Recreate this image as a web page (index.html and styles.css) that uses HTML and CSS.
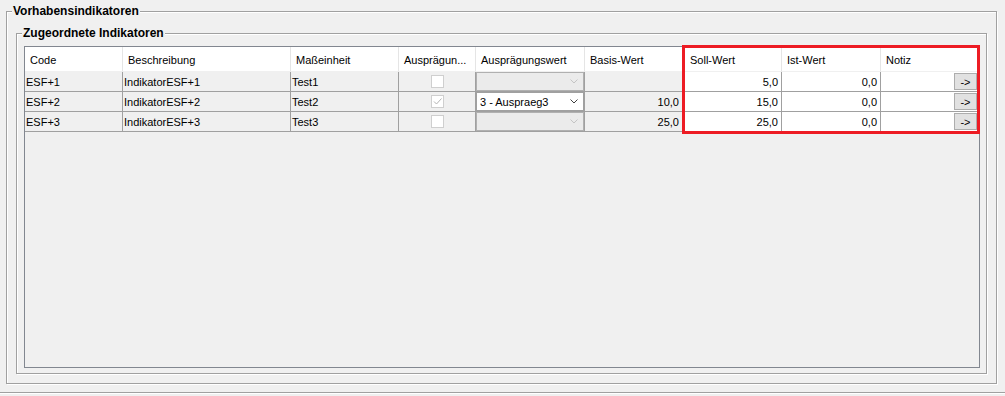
FILE: index.html
```html
<!DOCTYPE html>
<html>
<head>
	<meta charset="UTF-8">
	<title>Vorhabensindikatoren</title>
	<link rel="stylesheet" href="styles.css">
</head>
<body>
	<fieldset class="group outer">
		<legend>Vorhabensindikatoren</legend>
		<fieldset class="group inner">
			<legend>Zugeordnete Indikatoren</legend>
			<div class="grid-box">
				<table class="grid">
					<colgroup>
						<col class="c-code">
						<col class="c-desc">
						<col class="c-unit">
						<col class="c-flag">
						<col class="c-value">
						<col class="c-base">
						<col class="c-target">
						<col class="c-actual">
						<col class="c-note">
					</colgroup>
					<thead>
						<tr>
							<th>Code</th>
							<th>Beschreibung</th>
							<th>Maßeinheit</th>
							<th>Ausprägun...</th>
							<th>Ausprägungswert</th>
							<th>Basis-Wert</th>
							<th>Soll-Wert</th>
							<th>Ist-Wert</th>
							<th class="last">Notiz</th>
						</tr>
					</thead>
					<tbody>
						<tr>
							<td>ESF+1</td>
							<td>IndikatorESF+1</td>
							<td>Test1</td>
							<td class="check"><span class="box"></span></td>
							<td class="combo-cell">
								<div class="combo disabled"><span></span>
									<svg width="8" height="5" viewBox="0 0 8 5"><path d="M0.5 0.5 L4 4 L7.5 0.5" fill="none" stroke="#c4c4c4"/></svg>
								</div>
							</td>
							<td class="num base"></td>
							<td class="num edit">5,0</td>
							<td class="num edit">0,0</td>
							<td class="note last"><button class="more">-&gt;</button></td>
						</tr>
						<tr>
							<td>ESF+2</td>
							<td>IndikatorESF+2</td>
							<td>Test2</td>
							<td class="check">
								<span class="box">
									<svg width="11" height="11" viewBox="0 0 11 11"><path d="M2 5.5 L4.5 8 L9.5 2.5" fill="none" stroke="#b4b4b4"/></svg>
								</span>
							</td>
							<td class="combo-cell">
								<div class="combo"><span>3 - Auspraeg3</span>
									<svg width="8" height="5" viewBox="0 0 8 5"><path d="M0.5 0.5 L4 4 L7.5 0.5" fill="none" stroke="#404040"/></svg>
								</div>
							</td>
							<td class="num base">10,0</td>
							<td class="num edit">15,0</td>
							<td class="num edit">0,0</td>
							<td class="note last"><button class="more">-&gt;</button></td>
						</tr>
						<tr>
							<td>ESF+3</td>
							<td>IndikatorESF+3</td>
							<td>Test3</td>
							<td class="check"><span class="box"></span></td>
							<td class="combo-cell">
								<div class="combo disabled"><span></span>
									<svg width="8" height="5" viewBox="0 0 8 5"><path d="M0.5 0.5 L4 4 L7.5 0.5" fill="none" stroke="#c4c4c4"/></svg>
								</div>
							</td>
							<td class="num base">25,0</td>
							<td class="num edit">25,0</td>
							<td class="num edit">0,0</td>
							<td class="note last"><button class="more">-&gt;</button></td>
						</tr>
					</tbody>
				</table>
				<div class="highlight"></div>
			</div>
		</fieldset>
	</fieldset>
	<div class="separator"></div>
</body>
</html>
```

FILE: styles.css
```css
body {
    margin: 0;
    background: #f0f0f0;
    font-family: "Liberation Sans", Arial, sans-serif;
    font-size: 11px;
    color: #000;
}
.group {
    min-width: 0;
    padding: 0;
    border: 1px solid #a0a0a0;
    box-shadow: inset 1px 1px 0 #fff, 1px 1px 0 #fff;
}
.group > legend {
    margin-left: 5px;
    padding: 0 1px;
    background: #f0f0f0;
    font-size: 12px;
    font-weight: bold;
    line-height: 14px;
}
.outer {
    margin: 4px 8px 0 6px;
}
.inner {
    margin: 8px 9px 9px 9px;
}
.grid-box {
    position: relative;
    height: 322px;
    box-sizing: border-box;
    margin: 6px 6px 5px 7px;
    border: 1px solid #828790;
    background: #f0f0f0;
}
.grid {
    width: 954px;
    table-layout: fixed;
    border-collapse: separate;
    border-spacing: 0;
}
.c-code { width: 98px; }
.c-desc { width: 168px; }
.c-unit { width: 108px; }
.c-flag { width: 77px; }
.c-value { width: 109px; }
.c-base { width: 100px; }
.c-target { width: 97px; }
.c-actual { width: 99px; }
.c-note { width: 98px; }

.grid thead tr { height: 25px; }
.grid tbody tr { height: 20px; }
.grid th {
    padding: 2px 5px 0;
    background: #fff;
    border-right: 1px solid #e5e5e5;
    border-bottom: 1px solid #f0f0f0;
    font-weight: normal;
    text-align: left;
    white-space: nowrap;
    overflow: hidden;
}
.grid td {
    padding: 0 1px;
    border-right: 1px solid #a0a0a0;
    border-bottom: 1px solid #a0a0a0;
    white-space: nowrap;
    overflow: hidden;
}
.grid th.last,
.grid td.last { border-right: none; }
.grid td.num { text-align: right; padding-right: 3px; }
.grid td.base { padding-right: 5px; }
.grid td.edit,
.grid td.note { background: #fff; }

.check { text-align: center; }
.box {
    display: inline-block;
    width: 13px;
    height: 13px;
    box-sizing: border-box;
    border: 1px solid #cfcfcf;
    background: #fff;
    vertical-align: middle;
}
.box svg { display: block; }

.grid td.combo-cell { padding: 0; }
.combo {
    display: flex;
    align-items: center;
    height: 19px;
    box-sizing: border-box;
    padding: 0 5px 0 3px;
    border: 1px solid #a0a0a0;
    background: #fff;
}
.combo span { flex: 1; }
.combo.disabled {
    background: #ebebeb;
    border-color: #b0b0b0;
}

.grid td.note { text-align: right; padding-right: 2px; }
.more {
    width: 23px;
    height: 17px;
    margin: 0;
    padding: 0;
    border: 1px solid #adadad;
    background: #e1e1e1;
    font-family: inherit;
    font-size: 11px;
    color: #000;
    vertical-align: middle;
}

.highlight {
    position: absolute;
    left: 657px;
    top: -2px;
    width: 298px;
    height: 89px;
    box-sizing: border-box;
    border: 3px solid #ed1c24;
}

.separator {
    margin-top: 8px;
    border-top: 1px solid #a0a0a0;
    border-bottom: 1px solid #fff;
}
```
